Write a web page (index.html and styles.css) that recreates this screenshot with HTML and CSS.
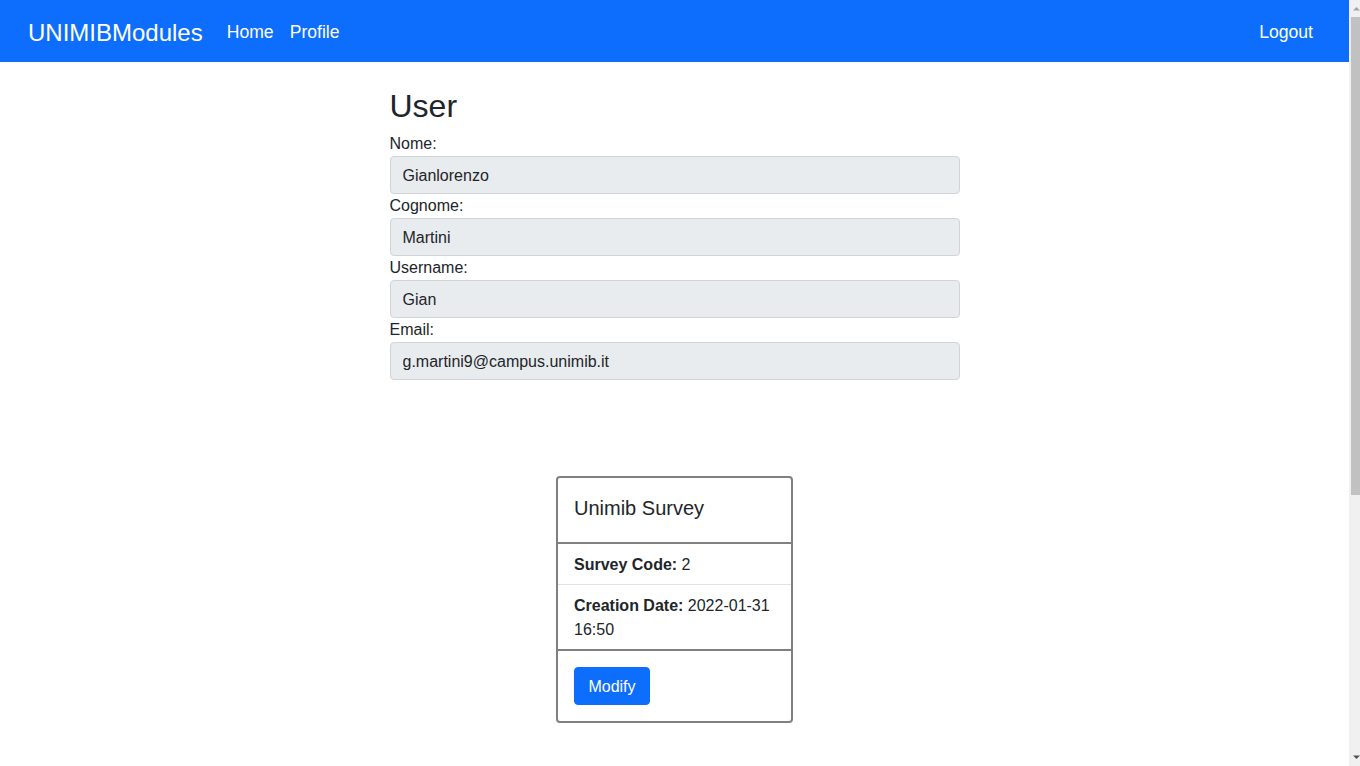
FILE: index.html
```html
<!DOCTYPE html>
<html lang="it">
<head>
<meta charset="utf-8">
<title>UNIMIBModules - Profile</title>
<link rel="stylesheet" href="styles.css">
</head>
<body>
<div class="layout">
  <div class="app">
    <nav class="navbar">
      <div class="navbar-left">
        <a class="brand" href="#">UNIMIBModules</a>
        <ul class="nav">
          <li><a class="nav-link" href="#">Home</a></li>
          <li><a class="nav-link" href="#">Profile</a></li>
        </ul>
      </div>
      <ul class="nav">
        <li><a class="nav-link" href="#">Logout</a></li>
      </ul>
    </nav>

    <main class="page">
      <section class="profile">
        <h2 class="title">User</h2>
        <label class="label" for="nome">Nome:</label>
        <input class="field" id="nome" type="text" value="Gianlorenzo" readonly>
        <label class="label" for="cognome">Cognome:</label>
        <input class="field" id="cognome" type="text" value="Martini" readonly>
        <label class="label" for="username">Username:</label>
        <input class="field" id="username" type="text" value="Gian" readonly>
        <label class="label" for="email">Email:</label>
        <input class="field" id="email" type="text" value="g.martini9@campus.unimib.it" readonly>
      </section>

      <section class="surveys">
        <div class="card">
          <div class="card-head">
            <h5 class="card-title">Unimib Survey</h5>
          </div>
          <ul class="list">
            <li class="list-item"><span class="key">Survey Code:</span> <span class="val">2</span></li>
            <li class="list-item"><span class="key">Creation Date:</span> <span class="val">2022-01-31</span> <span class="val">16:50</span></li>
          </ul>
          <div class="card-body">
            <button class="btn" type="button">Modify</button>
          </div>
        </div>
      </section>
    </main>
  </div>

  <aside class="scrollbar" aria-hidden="true">
    <div class="sb-btn">
      <svg width="11" height="17" viewBox="0 0 11 17"><polygon points="4,10.5 7.5,7 11,10.5" fill="#a3a3a3"/></svg>
    </div>
    <div class="sb-track"><div class="sb-thumb"></div></div>
    <div class="sb-btn">
      <svg width="11" height="17" viewBox="0 0 11 17"><polygon points="4,6.5 7.5,10 11,6.5" fill="#505050"/></svg>
    </div>
  </aside>
</div>
</body>
</html>
```

FILE: styles.css
```css
* { box-sizing: border-box; }

html { background: #fff; }

body {
  margin: 0;
  font-family: "Liberation Sans", Arial, sans-serif;
  font-size: 16px;
  line-height: 1.5;
  color: #212529;
  background: #fff;
}

a { text-decoration: none; color: inherit; }

.layout {
  display: flex;
  align-items: flex-start;
}

.app {
  flex: 1;
  min-width: 0;
}

/* window scrollbar */
.scrollbar {
  position: sticky;
  top: 0;
  flex: 0 0 11px;
  width: 11px;
  height: 100vh;
  background: #f0f0f0;
  display: flex;
  flex-direction: column;
}

.sb-btn {
  height: 17px;
  flex: 0 0 17px;
  overflow: hidden;
}

.sb-btn svg { display: block; }

.sb-track {
  flex: 1;
  padding-left: 2px;
}

.sb-thumb {
  height: 478px;
  background: #c1c1c1;
}

/* navbar */
.navbar {
  display: flex;
  align-items: center;
  justify-content: space-between;
  background: #0d6efd;
  padding: 8px 28px;
  height: 62px;
}

.navbar-left { display: flex; align-items: center; }

.brand {
  font-size: 24px;
  line-height: 36px;
  padding: 7px 0 3px;
  margin-right: 16px;
  color: #fff;
}

.nav {
  list-style: none;
  margin: 0;
  padding: 0;
  display: flex;
}

.nav-link {
  display: block;
  padding: 9px 8px 7px;
  font-size: 17.6px;
  line-height: 26.4px;
  color: #fff;
}

/* page */
.page { padding-bottom: 450px; }

.profile {
  width: 570px;
  margin: 24px auto 0;
}

.title {
  margin: 0 0 8px;
  padding-top: 2px;
  font-size: 32px;
  font-weight: 500;
  line-height: 36.4px;
}

.label {
  display: block;
  line-height: 24px;
}

.field {
  display: block;
  width: 100%;
  height: 38px;
  padding: 7px 12px 5px;
  font: inherit;
  line-height: 24px;
  color: #212529;
  background: #e9ecef;
  border: 1px solid #ced4da;
  border-radius: 4px;
  outline: none;
}

.surveys {
  display: flex;
  justify-content: center;
  margin-top: 96px;
}

.card {
  width: 237px;
  border: 2px solid #808080;
  border-radius: 4px;
  background: #fff;
}

.card-head { padding: 18px 16px 14px; }

.card-body { padding: 16px; }

.card-title {
  margin: 0 0 8px;
  font-size: 20px;
  font-weight: 500;
  line-height: 24px;
}

.list {
  list-style: none;
  margin: 0;
  padding: 0;
  border-top: 2px solid #808080;
  border-bottom: 2px solid #808080;
}

.list-item {
  padding: 9px 16px 7px;
}

.list-item + .list-item { border-top: 1px solid #dee2e6; }

.key { font-weight: 700; }

.val { white-space: nowrap; }

.btn {
  font: inherit;
  color: #fff;
  background: #0d6efd;
  border: 1px solid #0d6efd;
  border-radius: 4px;
  padding: 7px 12px 5px;
  line-height: 24px;
  width: 76px;
  cursor: pointer;
}
```
